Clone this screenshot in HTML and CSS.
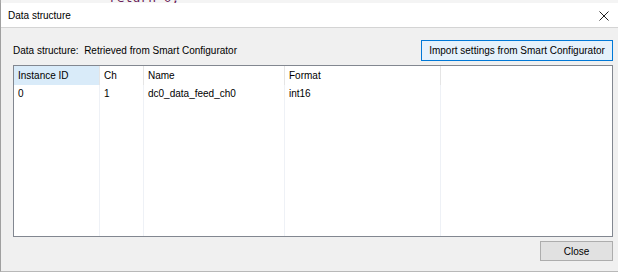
FILE: index.html
```html
<!DOCTYPE html>
<html>
<head>
<meta charset="utf-8">
<link rel="stylesheet" href="styles.css">
</head>
<body>
<div class="backdrop"><span class="code">return 0;</span></div>
<div class="dialog">
  <div class="titlebar">
    <span class="title">Data structure</span>
    <svg class="close-x" width="10" height="10" viewBox="0 0 10 10"><path d="M0.5 0.5L9.5 9.5M9.5 0.5L0.5 9.5" stroke="#222" stroke-width="1" fill="none"/></svg>
  </div>
  <div class="content">
    <div class="toprow">
      <span class="label">Data structure:&nbsp; Retrieved from Smart Configurator</span>
      <button class="btn btn-focus">Import settings from Smart Configurator</button>
    </div>
    <div class="list">
      <div class="row header">
        <div class="cell c1 sorted">Instance ID</div>
        <div class="cell c2">Ch</div>
        <div class="cell c3">Name</div>
        <div class="cell c4">Format</div>
        <div class="cell c5"></div>
      </div>
      <div class="row">
        <div class="cell c1">0</div>
        <div class="cell c2">1</div>
        <div class="cell c3">dc0_data_feed_ch0</div>
        <div class="cell c4">int16</div>
        <div class="cell c5"></div>
      </div>
      <div class="row filler">
        <div class="cell c1"></div>
        <div class="cell c2"></div>
        <div class="cell c3"></div>
        <div class="cell c4"></div>
        <div class="cell c5"></div>
      </div>
    </div>
    <div class="bottomrow">
      <button class="btn btn-close">Close</button>
    </div>
  </div>
</div>
</body>
</html>
```
FILE: styles.css
```css
html, body {
  margin: 0;
  padding: 0;
  background: #ffffff;
  width: 618px;
  height: 272px;
  overflow: hidden;
  font-family: "Liberation Sans", Arial, sans-serif;
  font-size: 10px;
  color: #000;
}
.backdrop {
  height: 3px;
  overflow: hidden;
  background: #f4f4f4;
  padding-left: 108px;
  border-left: 1px solid #a8a8a8;
}
.code {
  display: block;
  margin-top: -9px;
  font-family: "DejaVu Sans Mono", monospace;
  font-size: 13px;
  line-height: 13px;
  color: #6b1d5a;
}
.dialog {
  border-left: 1px solid #a0a0a0;
  border-bottom: 1px solid #b8b8b8;
  height: 268px;
  display: flex;
  flex-direction: column;
  background: #f0f0f0;
}
.titlebar {
  height: 24px;
  background: #ffffff;
  border-bottom: 1px solid #d4d4d4;
  display: flex;
  align-items: center;
  justify-content: space-between;
  padding: 0 9px 0 7px;
}
.title {
  font-size: 10px;
  color: #000;
  padding-top: 1px;
}
.close-x {
  display: block;
  margin-top: 1px;
}
.content {
  flex: 1;
  display: flex;
  flex-direction: column;
  padding: 12px 5px 0 12px;
}
.toprow {
  display: flex;
  align-items: center;
  justify-content: space-between;
  height: 21px;
}
.label {
  color: #000;
}
.btn {
  font-family: inherit;
  font-size: 10px;
  color: #000;
  margin: 0;
  padding: 0;
  box-sizing: border-box;
  cursor: default;
}
.btn-focus {
  width: 192px;
  height: 21px;
  background: #e5f1fb;
  border: 1px solid #0078d7;
}
.list {
  margin-top: 4px;
  height: 172px;
  box-sizing: border-box;
  border: 1px solid #828790;
  background: #ffffff;
  display: flex;
  flex-direction: column;
}
.row {
  display: flex;
  height: 17px;
}
.row.header {
  height: 19px;
}
.row.filler {
  flex: 1;
}
.cell {
  box-sizing: border-box;
  padding-left: 4px;
  display: flex;
  align-items: center;
  border-right: 1px solid #eef1f6;
  white-space: nowrap;
}
.header .cell {
  border-right-color: #e5e5e5;
}
.cell.sorted {
  background: #d9ebf9;
}
.c1 { width: 86px; }
.c2 { width: 44px; }
.c3 { width: 141px; }
.c4 { width: 156px; }
.c5 { flex: 1; border-right: none; }
.bottomrow {
  display: flex;
  justify-content: flex-end;
  margin-top: 4px;
}
.btn-close {
  width: 73px;
  height: 20px;
  background: #e1e1e1;
  border: 1px solid #adadad;
}
```
